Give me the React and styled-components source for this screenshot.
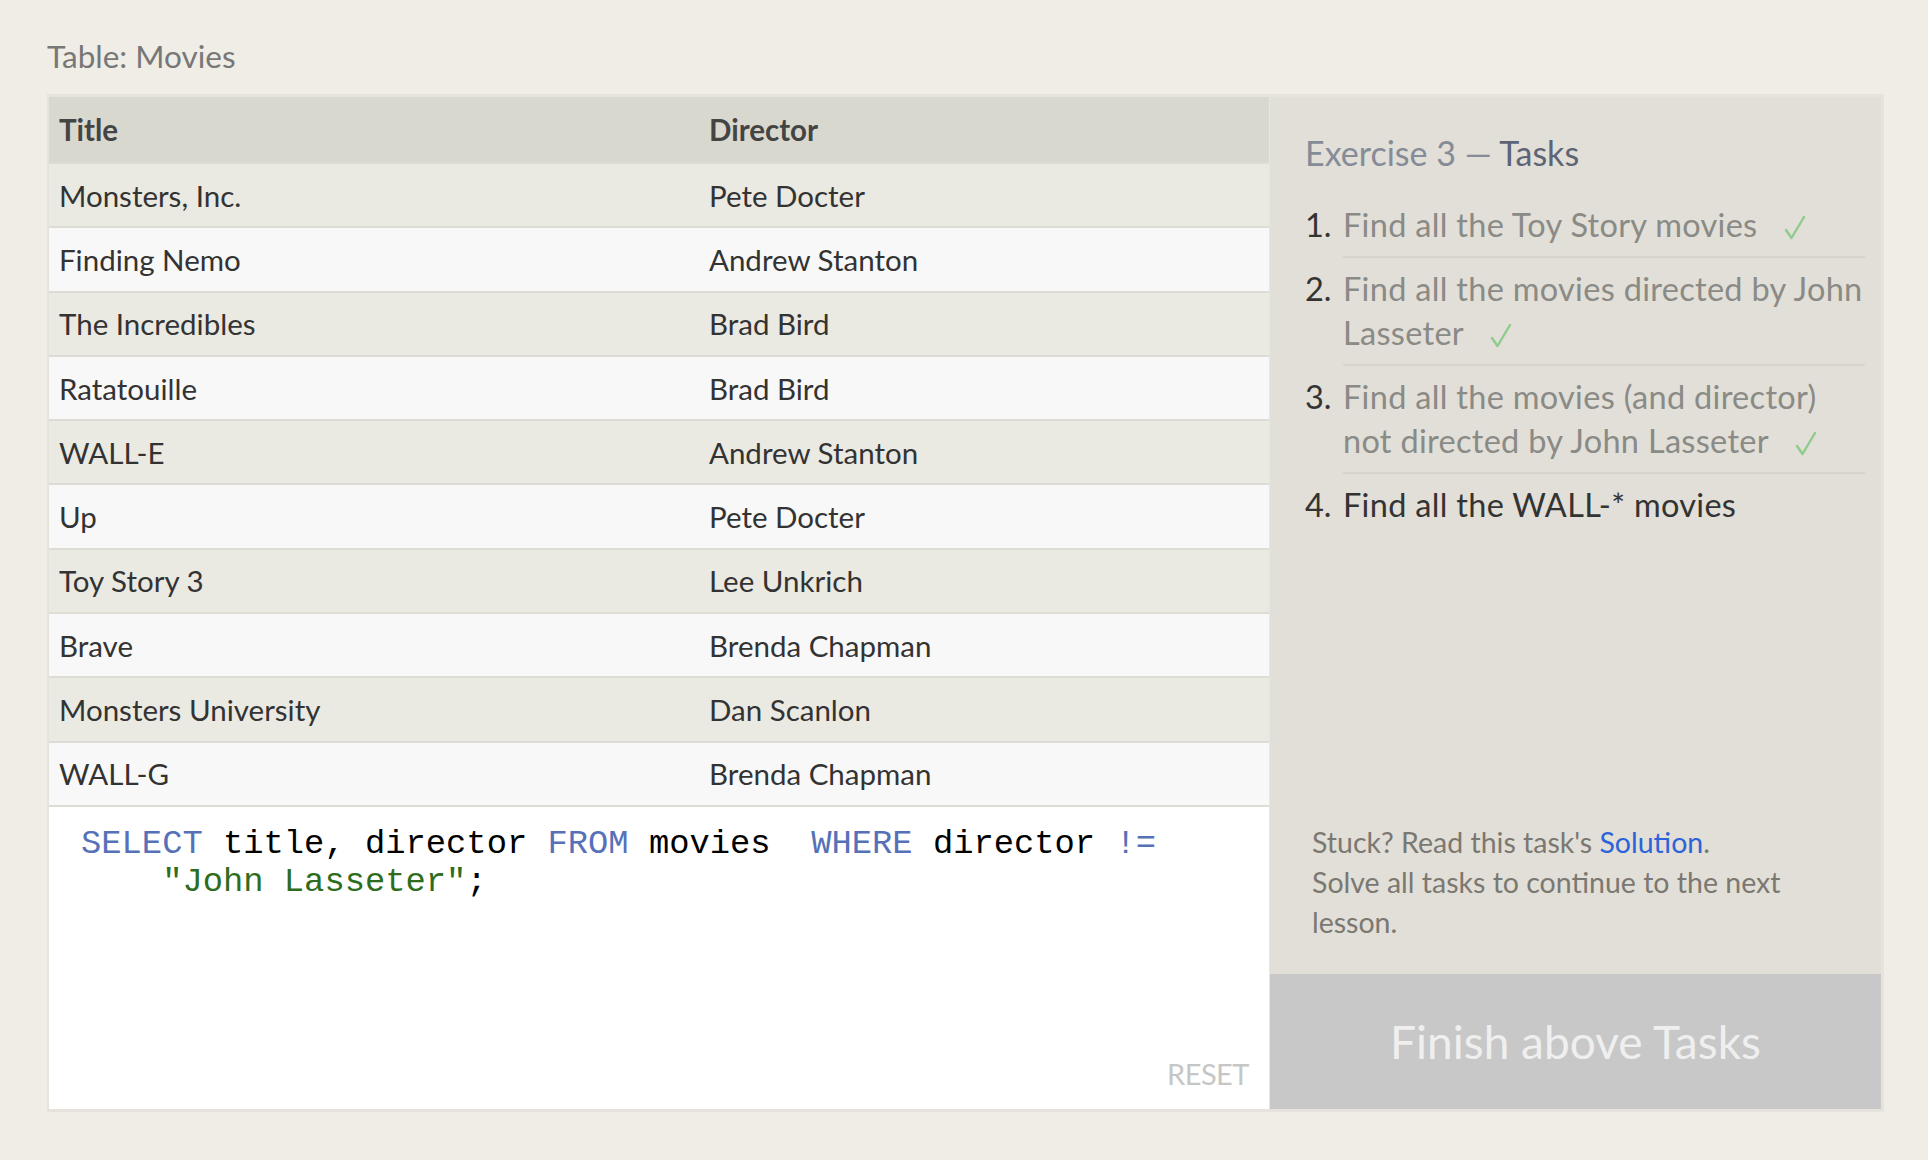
import React from 'react';
import styled, { createGlobalStyle } from 'styled-components';

const movies = [
    ['Monsters, Inc.', 'Pete Docter'],
    ['Finding Nemo', 'Andrew Stanton'],
    ['The Incredibles', 'Brad Bird'],
    ['Ratatouille', 'Brad Bird'],
    ['WALL-E', 'Andrew Stanton'],
    ['Up', 'Pete Docter'],
    ['Toy Story 3', 'Lee Unkrich'],
    ['Brave', 'Brenda Chapman'],
    ['Monsters University', 'Dan Scanlon'],
    ['WALL-G', 'Brenda Chapman'],
];

const tasks = [
    { text: 'Find all the Toy Story movies', done: true },
    { text: 'Find all the movies directed by John Lasseter', done: true },
    { text: 'Find all the movies (and director) not directed by John Lasseter', done: true },
    { text: 'Find all the WALL-* movies', done: false },
];

const GlobalStyle = createGlobalStyle`
    body {
        margin: 0;
        background: #efede6;
        font-family: Lato, "Open Sans", sans-serif;
        color: #333;
    }
`;

const Check = () => (
    <CheckMark viewBox="0 0 22 24" width="22" height="24">
        <path d="M2 14 L7.5 22 L20 1" fill="none" stroke="#8ecb8c" strokeWidth="2.4" strokeLinecap="round" strokeLinejoin="round" />
    </CheckMark>
);

const App = () => {
    return (
        <Page>
            <GlobalStyle />
            <Caption>Table: Movies</Caption>
            <Board>
                <LeftPane>
                    <Row head>
                        <Cell>Title</Cell>
                        <Cell>Director</Cell>
                    </Row>
                    {movies.map(([title, director], i) => (
                        <Row key={title} odd={i % 2 === 0}>
                            <Cell>{title}</Cell>
                            <Cell>{director}</Cell>
                        </Row>
                    ))}
                    <Editor>
                        <Code>
                            <Kw>SELECT</Kw> title, director <Kw>FROM</Kw> movies  <Kw>WHERE</Kw> director <Kw>!=</Kw>{'\n'}
                            {'    '}<Str>"John Lasseter"</Str>;
                        </Code>
                        <Reset>RESET</Reset>
                    </Editor>
                </LeftPane>
                <Panel>
                    <PanelBody>
                        <Heading>Exercise 3 — <strong>Tasks</strong></Heading>
                        <TaskList>
                            {tasks.map((t, i) => (
                                <Task key={i}>
                                    <TaskNum>{i + 1}.</TaskNum>
                                    <TaskText done={t.done} last={i === tasks.length - 1}>
                                        {t.text}
                                        {t.done && <Check />}
                                    </TaskText>
                                </Task>
                            ))}
                        </TaskList>
                        <Hint>
                            Stuck? Read this task's <SolutionLink>Solution</SolutionLink>.<br />
                            Solve all tasks to continue to the next lesson.
                        </Hint>
                    </PanelBody>
                    <FinishButton>Finish above Tasks</FinishButton>
                </Panel>
            </Board>
        </Page>
    );
};

const Page = styled.div`
    padding: 37px 0 40px 47px;
    min-height: 1160px;
    box-sizing: border-box;
`;

const Caption = styled.div`
    font-size: 31.5px;
    line-height: 38px;
    color: #777;
    margin-bottom: 19px;
`;

const Board = styled.div`
    display: flex;
    width: 1832px;
    height: 1012px;
    border: 3px solid #e5e3dc;
    border-left-width: 2px;
`;

const LeftPane = styled.div`
    width: 1220px;
    display: flex;
    flex-direction: column;
    background: #fff;
`;

const Row = styled.div`
    display: grid;
    grid-template-columns: 650px 1fr;
    align-items: center;
    height: ${p => (p.head ? '65px' : '64.3px')};
    flex: none;
    box-sizing: border-box;
    padding: 0 10px;
    background: ${p => (p.head ? '#d9d8cf' : p.odd ? '#eae9e2' : '#f8f8f8')};
    border-top: ${p => (p.head ? 'none' : '2px solid #dddcd5')};
    font-size: 29.5px;
    font-weight: ${p => (p.head ? 700 : 400)};
    color: ${p => (p.head ? '#444' : '#333')};
`;

const Cell = styled.div`
    white-space: nowrap;
`;

const Editor = styled.div`
    flex: 1;
    display: flex;
    flex-direction: column;
    padding: 18px 20px 18px 32px;
    border-top: 2px solid #dddcd5;
    background: #fff;
`;

const Code = styled.pre`
    margin: 0;
    font-family: "Liberation Mono", "Courier New", monospace;
    font-size: 33.8px;
    line-height: 38px;
    color: #000;
`;

const Kw = styled.span`
    color: #5671b7;
`;

const Str = styled.span`
    color: #2d6d1d;
`;

const Reset = styled.div`
    margin-top: auto;
    align-self: flex-end;
    font-size: 29px;
    letter-spacing: -0.5px;
    color: #c6c6c6;
`;

const Panel = styled.div`
    width: 611px;
    display: flex;
    flex-direction: column;
    background: #e1dfd7;
    border-left: 1px solid #e8e6df;
`;

const PanelBody = styled.div`
    flex: 1;
    display: flex;
    flex-direction: column;
    padding: 36px 16px 0 35px;
`;

const Heading = styled.div`
    font-size: 34px;
    line-height: 40px;
    color: #868b98;
    margin-bottom: 21px;

    strong {
        font-weight: 400;
        color: #5d6476;
    }
`;

const TaskList = styled.ol`
    list-style: none;
    margin: 0;
    padding: 0;
`;

const Task = styled.li`
    display: flex;
    font-size: 32.5px;
    line-height: 44px;
`;

const TaskNum = styled.span`
    width: 38px;
    flex: none;
    padding-top: 9px;
    color: #333;
`;

const TaskText = styled.span`
    flex: 1;
    padding: 9px 0;
    letter-spacing: 0.3px;
    color: ${p => (p.done ? '#8a8a86' : '#333')};
    border-bottom: ${p => (p.last ? 'none' : '2px solid #d6d4cb')};
`;

const CheckMark = styled.svg`
    margin-left: 26px;
    vertical-align: -3px;
`;

const Hint = styled.div`
    margin-top: auto;
    padding: 0 0 32px 7px;
    margin-right: 26px;
    font-size: 28.5px;
    line-height: 40px;
    color: #7b7872;
`;

const SolutionLink = styled.a`
    color: #2d63d8;
    text-decoration: none;
`;

const FinishButton = styled.div`
    height: 135px;
    flex: none;
    display: flex;
    align-items: center;
    justify-content: center;
    background: #c8c8c8;
    color: #efefef;
    font-size: 46px;
`;

export default App;
